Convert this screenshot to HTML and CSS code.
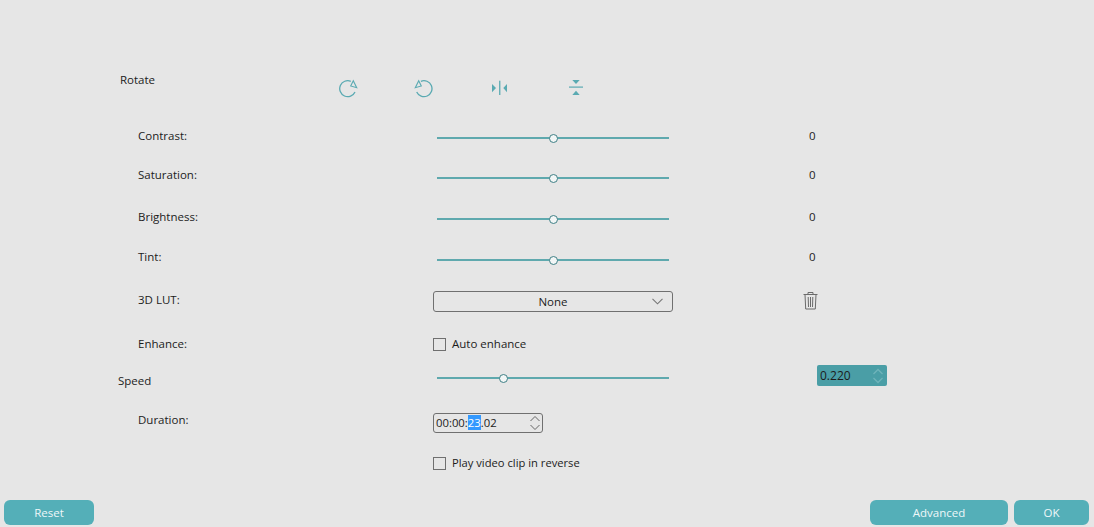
FILE: index.html
```html
<!DOCTYPE html>
<html lang="en">
<head>
  <meta charset="UTF-8" />
  <title>Video settings</title>
  <link rel="stylesheet" href="styles.css">
</head>
<body>
<div class="form">
  <div class="label label-top">Rotate</div>
  <div class="rotate-icons">
    <button class="icon-btn" aria-label="Rotate right">
      <svg width="20" height="20" viewBox="0 0 20 20" fill="none" stroke="#5aaab2" stroke-width="1.3">
        <path d="M17 14A8 8 0 1 1 12.800 3.300"/>
        <path d="M15.300 2.700l3.400 7-6-1.700z" stroke-width="1.100"/>
      </svg>
    </button>
    <button class="icon-btn" aria-label="Rotate left">
      <svg width="20" height="20" viewBox="0 0 20 20" fill="none" stroke="#5aaab2" stroke-width="1.3">
        <path d="M2.700 14A8 8 0 1 0 6.900 3.300"/>
        <path d="M4.700 2.700L1.300 9.700 7.300 8z" stroke-width="1.100"/>
      </svg>
    </button>
    <button class="icon-btn" aria-label="Flip horizontal">
      <svg width="20" height="20" viewBox="0 0 20 20" fill="#5aaab2">
        <rect x="9.100" y="2.700" width="1.300" height="14.300"/>
        <path d="M2 6l4 4.100-4 4.200zM17 6l-3.700 4.100 3.700 4.200z"/>
      </svg>
    </button>
    <button class="icon-btn" aria-label="Flip vertical">
      <svg width="20" height="20" viewBox="0 0 20 20" fill="#5aaab2">
        <rect x="3" y="8.500" width="14" height="1.200"/>
        <path d="M6.300 2h7.400L10 6zM6.300 17h7.400L10 12.700z"/>
      </svg>
    </button>
  </div>

  <div class="label">Contrast:</div>
  <div class="control"><div class="slider"><span class="thumb" style="left: 50%"></span></div></div>
  <div class="value">0</div>

  <div class="label">Saturation:</div>
  <div class="control"><div class="slider slider-low"><span class="thumb" style="left: 50%"></span></div></div>
  <div class="value">0</div>

  <div class="label">Brightness:</div>
  <div class="control"><div class="slider"><span class="thumb" style="left: 50%"></span></div></div>
  <div class="value">0</div>

  <div class="label">Tint:</div>
  <div class="control"><div class="slider slider-low"><span class="thumb" style="left: 50%"></span></div></div>
  <div class="value">0</div>

  <div class="label">3D LUT:</div>
  <div class="control">
    <div class="combo">
      <span>None</span>
      <svg class="combo-arrow" width="11" height="7" viewBox="0 0 11 7" fill="none" stroke="#777" stroke-width="1.100"><path d="M.5 .8l5 5 5-5"/></svg>
    </div>
  </div>
  <div class="value value-trash">
    <svg width="17" height="19" viewBox="0 0 17 19" fill="none" stroke="#6b6b6b" stroke-width="1">
      <path d="M1.500 3.500h14M6 3.500V1.500h5v2M3 3.500l.7 14.500h9.600l.7-14.500M6.200 6l.3 10M8.500 6v10M10.800 6l-.3 10"/>
    </svg>
  </div>

  <div class="label">Enhance:</div>
  <div class="control control-check"><label class="check"><span class="box"></span>Auto enhance</label></div>
  <div class="value"></div>

  <div class="label label-speed">Speed</div>
  <div class="control control-speed"><div class="slider"><span class="thumb" style="left: 28.6%"></span></div></div>
  <div class="value">
    <div class="speed-box">
      <span>0.220</span>
      <svg width="12" height="16" viewBox="0 0 12 16" fill="none" stroke="#6fb4ba" stroke-width="1.300"><path d="M1.500 6L6 1.500 10.500 6M1.500 10L6 14.500 10.500 10"/></svg>
    </div>
  </div>

  <div class="label">Duration:</div>
  <div class="control">
    <div class="duration">
      <span>00:00:<span class="selected">23</span>.02</span>
      <svg width="12" height="16" viewBox="0 0 12 16" fill="none" stroke="#666" stroke-width="1"><path d="M1.500 6L6 1.500 10.500 6M1.500 10L6 14.500 10.500 10"/></svg>
    </div>
  </div>
  <div class="value"></div>

  <div class="label"></div>
  <div class="control control-check"><label class="check check-long"><span class="box"></span>Play video clip in reverse</label></div>
  <div class="value"></div>
</div>

<div class="footer">
  <button class="btn btn-reset">Reset</button>
  <div class="footer-right">
    <button class="btn btn-advanced">Advanced</button>
    <button class="btn btn-ok">OK</button>
  </div>
</div>
</body>
</html>
```

FILE: styles.css
```css
html, body {
  height: 100%;
}
body {
  margin: 0;
  background: #e6e6e6;
  color: #1c1c1c;
  font-family: "Open Sans", "Noto Sans", sans-serif;
  font-size: 11.5px;
  line-height: 16px;
  display: flex;
  flex-direction: column;
  overflow: hidden;
}
.form {
  display: grid;
  grid-template-columns: 338px 95px 376px 1fr;
  grid-template-rows: 56px 39px 42px 40px 43px 44px 37px 39px 43px 30px;
  padding-top: 72px;
}
.label {
  grid-column: 1 / 3;
  padding-left: 138px;
}
.label-top {
  grid-column: 1;
  padding-left: 120px;
}
.label-speed {
  padding-left: 118px;
}
.rotate-icons {
  grid-column: 2 / 5;
  display: flex;
  gap: 56px;
  padding-top: 6px;
}
.icon-btn {
  width: 20px;
  height: 20px;
  padding: 0;
  border: none;
  background: none;
  display: block;
}
.control {
  padding-top: 1px;
}
.control-speed, .control-check {
  padding-top: 0;
}
.slider {
  position: relative;
  width: 232px;
  height: 2px;
  margin: 8px 0 0 4px;
  background: #5fa9ae;
}
.slider-low {
  margin-top: 9px;
}
.control-speed .slider {
  margin-top: 4px;
}
.thumb {
  position: absolute;
  top: -3.500px;
  width: 9px;
  height: 9px;
  margin-left: -4.500px;
  background: #f2f6f6;
  border: 1px solid #3f7f85;
  border-radius: 50%;
  box-sizing: border-box;
}
.value-trash {
  margin: -1px 0 0 -7px;
}
.combo {
  box-sizing: border-box;
  width: 240px;
  height: 21px;
  margin-top: -2px;
  border: 1px solid #707070;
  border-radius: 3px;
  display: flex;
  align-items: center;
  justify-content: center;
  position: relative;
}
.combo-arrow {
  position: absolute;
  right: 9px;
  top: 6px;
}
.check {
  display: flex;
  align-items: center;
  gap: 6px;
}
.check-long {
  font-size: 11.2px;
}
.box {
  box-sizing: border-box;
  width: 13px;
  height: 13px;
  border: 1px solid #6f6f6f;
}
.speed-box {
  box-sizing: border-box;
  width: 70px;
  height: 21px;
  margin: -8px 0 0 8px;
  padding: 0 3px 0 3px;
  background: #4a9ea6;
  border-radius: 2px;
  display: flex;
  align-items: center;
  justify-content: space-between;
  font-size: 12px;
}
.duration {
  box-sizing: border-box;
  width: 110px;
  height: 20px;
  padding: 0 1px 0 2px;
  border: 1px solid #707070;
  border-radius: 3px;
  display: flex;
  align-items: center;
  justify-content: space-between;
  font-size: 11.3px;
}
.selected {
  background: #3399ff;
  color: #fff;
}
.footer {
  margin-top: auto;
  margin-bottom: 2px;
  padding: 0 5px 0 4px;
  display: flex;
  justify-content: space-between;
}
.footer-right {
  display: flex;
  gap: 6px;
}
.btn {
  height: 25px;
  padding: 0;
  border: none;
  border-radius: 6px;
  background: #54afb8;
  color: #eef7f8;
  font-family: "Open Sans", "Noto Sans", sans-serif;
  font-size: 11.5px;
}
.btn-reset {
  width: 90px;
}
.btn-advanced {
  width: 138px;
}
.btn-ok {
  width: 75px;
}
```
